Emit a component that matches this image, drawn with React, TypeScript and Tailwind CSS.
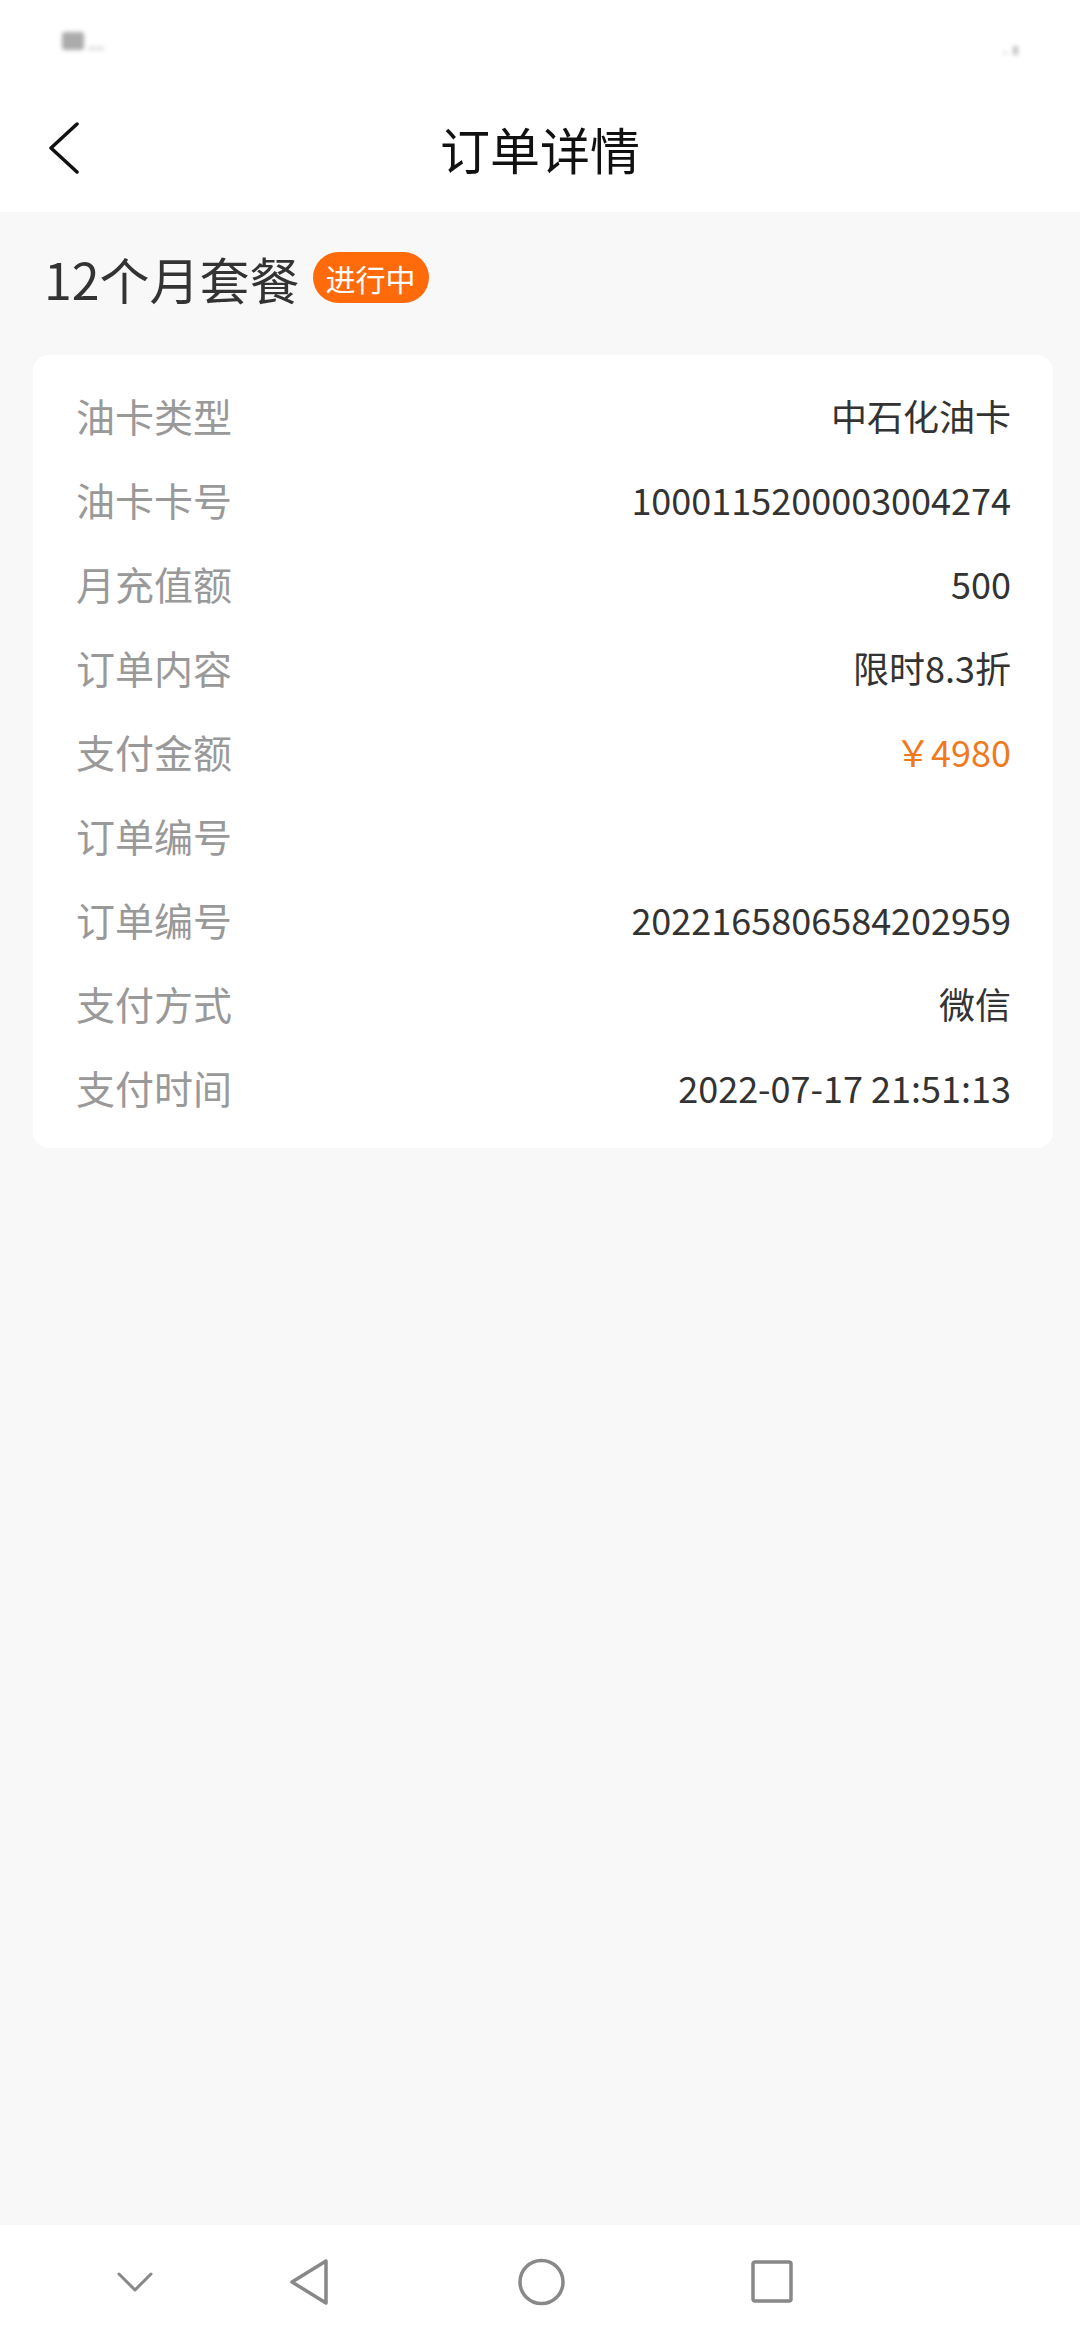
import React from 'react';

const rows: { label: string; value: string; accent?: boolean }[] = [
    { label: '油卡类型', value: '中石化油卡' },
    { label: '油卡卡号', value: '1000115200003004274' },
    { label: '月充值额', value: '500' },
    { label: '订单内容', value: '限时8.3折' },
    { label: '支付金额', value: '￥4980', accent: true },
    { label: '订单编号', value: '' },
    { label: '订单编号', value: '2022165806584202959' },
    { label: '支付方式', value: '微信' },
    { label: '支付时间', value: '2022-07-17 21:51:13' },
];

const font = { fontFamily: '"Noto Sans CJK SC", "Noto Sans", sans-serif' };

const App: React.FC = () => {
    return (
        <div className="min-h-[2340px] flex flex-col bg-[#f8f8f8]" style={font}>
            {/* Status bar (blurred in source) */}
            <div className="h-[84px] bg-white flex items-start justify-between px-[62px] pt-[32px]">
                <div className="flex items-end gap-[4px] blur-[2px] opacity-70">
                    <div className="w-[22px] h-[18px] bg-[#888] rounded-[3px]" />
                    <div className="w-[16px] h-[3px] bg-[#ccc]" />
                </div>
                <div className="flex items-end gap-[6px] blur-[2px] opacity-60 mt-[14px]">
                    <div className="w-[4px] h-[4px] bg-[#ccc] rounded-full" />
                    <div className="w-[5px] h-[9px] bg-[#999]" />
                </div>
            </div>

            {/* Header */}
            <header className="h-[128px] bg-white grid grid-cols-[1fr_auto_1fr] items-center">
                <div className="pl-[48px] flex items-center">
                    <svg width="32" height="52" viewBox="0 0 32 52" fill="none">
                        <polyline points="29,2 3,26 29,50" stroke="#111" strokeWidth="3.5" strokeLinecap="round" strokeLinejoin="round" />
                    </svg>
                </div>
                <h1 className="text-[50px] leading-none text-[#111]">订单详情</h1>
                <div />
            </header>

            {/* Content */}
            <main className="flex-1 pl-[33px] pr-[27px] pt-[40px]">
                <div className="flex items-center h-[51px] pl-[11px]">
                    <span className="text-[50px] leading-none text-[#333]">12个月套餐</span>
                    <span className="ml-[13px] h-[51px] px-[13px] rounded-full bg-[#ff6a0a] text-white text-[30px] leading-none flex items-center">进行中</span>
                </div>

                <section className="mt-[52px] bg-white rounded-[16px] pl-[43px] pr-[42px] pt-[18px] pb-[19px]">
                    {rows.map((r, i) => (
                        <div key={i} className="h-[84px] flex items-center justify-between">
                            <span className="text-[39px] leading-none text-[#999]">{r.label}</span>
                            <span className={`text-[36px] leading-none ${r.accent ? 'text-[#ef7a1e]' : 'text-[#333]'}`}>{r.value}</span>
                        </div>
                    ))}
                </section>
            </main>

            {/* Android nav bar */}
            <nav className="h-[115px] bg-white flex items-center pl-[117px] pb-[2px]">
                <svg width="36" height="20" viewBox="0 0 36 20" fill="none">
                    <polyline points="2,2 18,18 34,2" stroke="#888" strokeWidth="3" strokeLinecap="round" strokeLinejoin="round" />
                </svg>
                <svg className="ml-[135px]" width="42" height="48" viewBox="0 0 42 48" fill="none">
                    <path d="M38 3 L4 24 L38 45 Z" stroke="#888" strokeWidth="3.5" strokeLinejoin="round" />
                </svg>
                <svg className="ml-[188px]" width="47" height="48" viewBox="0 0 47 48" fill="none">
                    <circle cx="23.5" cy="24" r="21.5" stroke="#888" strokeWidth="3.5" />
                </svg>
                <svg className="ml-[186px]" width="42" height="43" viewBox="0 0 42 43" fill="none">
                    <rect x="2" y="2" width="38" height="39" rx="2" stroke="#888" strokeWidth="3.5" />
                </svg>
            </nav>
        </div>
    );
};

export default App;
